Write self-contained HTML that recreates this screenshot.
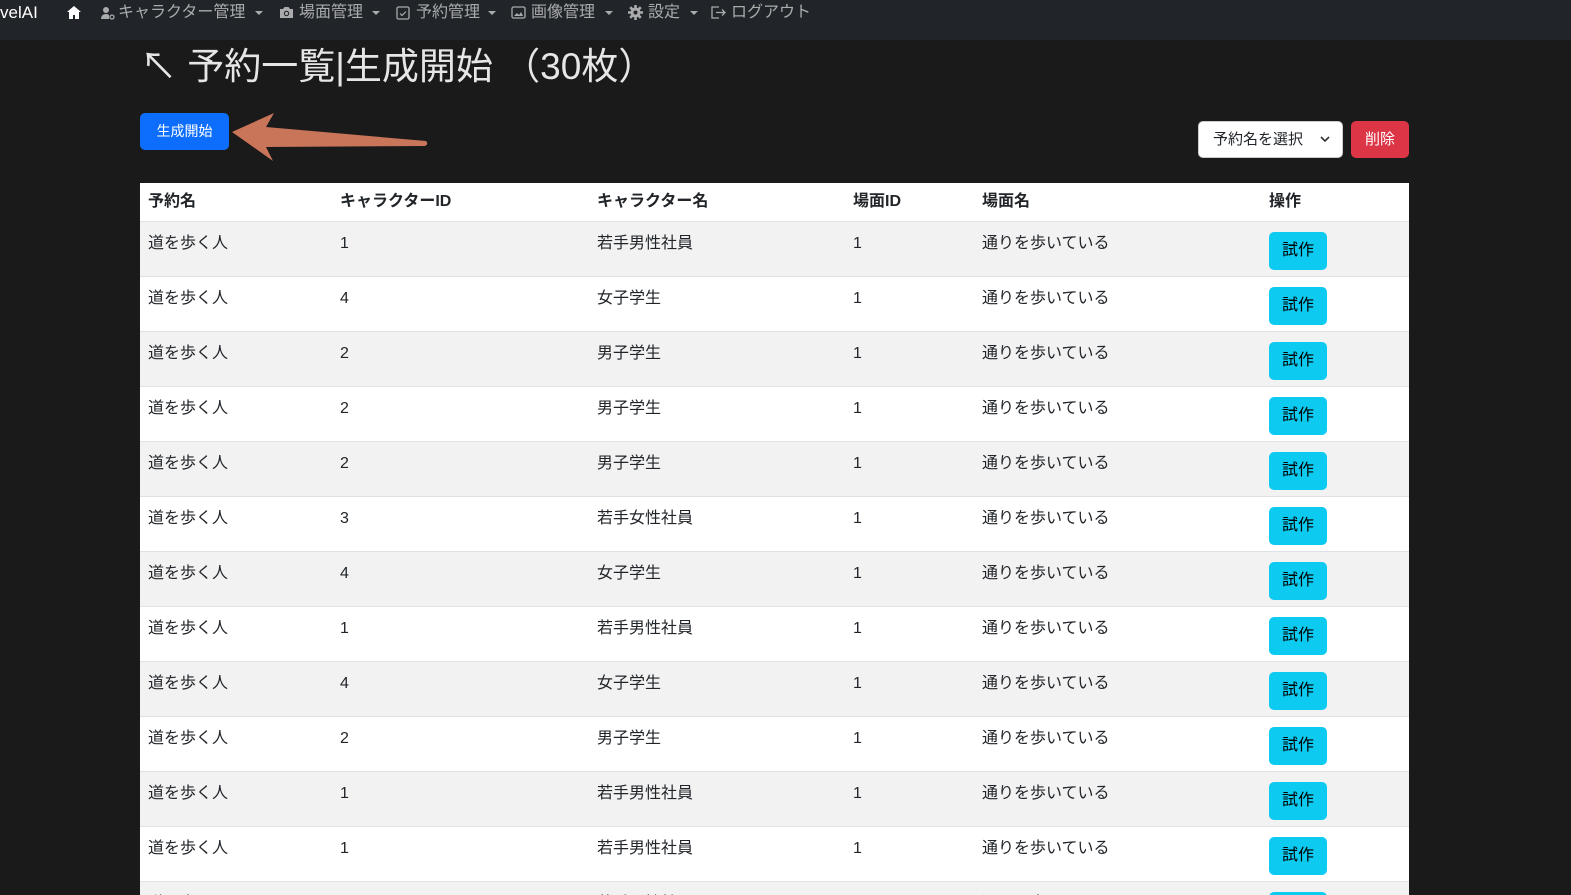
<!DOCTYPE html>
<html><head><meta charset="utf-8">
<style>
*{box-sizing:border-box;margin:0;padding:0}
html,body{width:1571px;height:895px;overflow:hidden}
body{background:#1a1a1a;font-family:"Liberation Sans","Noto Sans CJK JP",sans-serif}
#w{position:relative;width:1571px;height:895px;overflow:hidden}
.nav{position:absolute;left:0;top:0;width:1571px;height:40px;background:#212529}
.nav span{position:absolute;top:3px;font-size:16px;color:#a9abad;white-space:nowrap;line-height:20px}
.nav svg{position:absolute}
.car{position:absolute;top:11px;width:0;height:0;border-left:4px solid transparent;border-right:4px solid transparent;border-top:4px solid #a9abad}
h1{position:absolute;left:140px;top:42px;font-size:37px;font-weight:400;color:#e6e6e6;line-height:50px;white-space:nowrap}
.btn{position:absolute;border-radius:5px;font-size:14px;text-align:center}
table{position:absolute;left:140px;top:183px;width:1269px;border-collapse:collapse;background:#fff;font-size:16px;color:#212529;table-layout:fixed}
td,th{padding:8px;text-align:left;vertical-align:top;border-bottom:1px solid #dee2e6;line-height:22px;overflow:hidden}
th{height:38px;font-weight:700}
td{height:54px;padding-top:11px;padding-bottom:5px}
tr.s td{background:#f2f2f2}
.t{display:inline-block;width:58px;height:38px;background:#0dcaf0;border-radius:5px;text-align:center;line-height:38px;font-size:16px;color:#000;position:relative;top:-1px;vertical-align:top}
</style></head><body><div id="w">
<div class="nav">
<span style="left:0;color:#fff;font-size:17px">velAI</span>
<svg style="left:67px;top:6px" width="14" height="13" viewBox="0 0 14 13"><path d="M7 0L0 6h2v7h4V9h2v4h4V6h2z" fill="#fff"/></svg>
<svg style="left:101px;top:6px" width="14" height="14" viewBox="0 0 14 14"><circle cx="5" cy="4" r="3" fill="#a9abad"/><path d="M0 13c0-4 3-5 5-5s3 1 3 1v4z" fill="#a9abad"/><circle cx="11" cy="11" r="2" fill="none" stroke="#a9abad" stroke-width="1.3"/></svg>
<span style="left:118px">キャラクター管理</span><i class="car" style="left:255px"></i>
<svg style="left:279px;top:6px" width="15" height="13" viewBox="0 0 15 13"><path d="M1 3h3l1.5-2h4L11 3h3v9H1z" fill="#a9abad"/><circle cx="7.5" cy="7.5" r="2.7" fill="#212529"/><circle cx="7.5" cy="7.5" r="1.6" fill="#a9abad"/></svg>
<span style="left:299px">場面管理</span><i class="car" style="left:372px"></i>
<svg style="left:396px;top:5px" width="14" height="15" viewBox="0 0 14 15"><rect x="1" y="2" width="12" height="12" rx="1.5" fill="none" stroke="#a9abad" stroke-width="1.3"/><path d="M4 8.5l2 2 4-4" stroke="#a9abad" fill="none" stroke-width="1.2"/></svg>
<span style="left:416px">予約管理</span><i class="car" style="left:488px"></i>
<svg style="left:511px;top:6px" width="15" height="13" viewBox="0 0 15 13"><rect x="1" y="1" width="13" height="11" rx="1.5" fill="none" stroke="#a9abad" stroke-width="1.3"/><path d="M3 10l3-3 2 2 2-3 2 4z" fill="#a9abad"/></svg>
<span style="left:531px">画像管理</span><i class="car" style="left:605px"></i>
<svg style="left:628px;top:5px" width="15" height="15" viewBox="0 0 15 15"><circle cx="7.5" cy="7.5" r="5" fill="#a9abad"/><path d="M7.5 0v15M0 7.5h15M2.2 2.2l10.6 10.6M12.8 2.2L2.2 12.8" stroke="#a9abad" stroke-width="2.6"/><circle cx="7.5" cy="7.5" r="2" fill="#212529"/></svg>
<span style="left:648px">設定</span><i class="car" style="left:690px"></i>
<svg style="left:711px;top:6px" width="15" height="13" viewBox="0 0 15 13"><path d="M8 1H1v11h7M5 6.5h9M11 3.5l3 3-3 3" fill="none" stroke="#a9abad" stroke-width="1.3"/></svg>
<span style="left:731px">ログアウト</span>
</div>
<h1>↖ 予約一覧|生成開始 （30枚）</h1>
<div class="btn" style="left:140px;top:113px;width:89px;height:37px;background:#0d6efd;color:#fff;line-height:37px">生成開始</div>
<svg style="position:absolute;left:228px;top:110px" width="202" height="52" viewBox="0 0 202 52"><path d="M4 22L46 3 38 17 198 31q3 3-1 5L38 37 45 51z" fill="#c9755a"/></svg>
<div class="btn" style="left:1198px;top:121px;width:145px;height:37px;background:#fff;color:#212529;border:1px solid #ccc;line-height:35px;text-align:left;padding-left:14px;font-size:15px">予約名を選択 <svg style="position:absolute;left:121px;top:14px" width="10" height="7" viewBox="0 0 10 7"><path d="M1 1l4 4 4-4" stroke="#333" fill="none" stroke-width="1.6"/></svg></div>
<div class="btn" style="left:1351px;top:121px;width:58px;height:37px;background:#dc3545;color:#fff;line-height:37px;font-size:15px">削除</div>
<table>
<colgroup><col style="width:192px"><col style="width:257px"><col style="width:256px"><col style="width:129px"><col style="width:287px"><col style="width:148px"></colgroup>
<tr><th>予約名</th><th>キャラクターID</th><th>キャラクター名</th><th>場面ID</th><th>場面名</th><th>操作</th></tr>
<tr class="s"><td>道を歩く人</td><td>1</td><td>若手男性社員</td><td>1</td><td>通りを歩いている</td><td><span class="t">試作</span></td></tr>
<tr><td>道を歩く人</td><td>4</td><td>女子学生</td><td>1</td><td>通りを歩いている</td><td><span class="t">試作</span></td></tr>
<tr class="s"><td>道を歩く人</td><td>2</td><td>男子学生</td><td>1</td><td>通りを歩いている</td><td><span class="t">試作</span></td></tr>
<tr><td>道を歩く人</td><td>2</td><td>男子学生</td><td>1</td><td>通りを歩いている</td><td><span class="t">試作</span></td></tr>
<tr class="s"><td>道を歩く人</td><td>2</td><td>男子学生</td><td>1</td><td>通りを歩いている</td><td><span class="t">試作</span></td></tr>
<tr><td>道を歩く人</td><td>3</td><td>若手女性社員</td><td>1</td><td>通りを歩いている</td><td><span class="t">試作</span></td></tr>
<tr class="s"><td>道を歩く人</td><td>4</td><td>女子学生</td><td>1</td><td>通りを歩いている</td><td><span class="t">試作</span></td></tr>
<tr><td>道を歩く人</td><td>1</td><td>若手男性社員</td><td>1</td><td>通りを歩いている</td><td><span class="t">試作</span></td></tr>
<tr class="s"><td>道を歩く人</td><td>4</td><td>女子学生</td><td>1</td><td>通りを歩いている</td><td><span class="t">試作</span></td></tr>
<tr><td>道を歩く人</td><td>2</td><td>男子学生</td><td>1</td><td>通りを歩いている</td><td><span class="t">試作</span></td></tr>
<tr class="s"><td>道を歩く人</td><td>1</td><td>若手男性社員</td><td>1</td><td>通りを歩いている</td><td><span class="t">試作</span></td></tr>
<tr><td>道を歩く人</td><td>1</td><td>若手男性社員</td><td>1</td><td>通りを歩いている</td><td><span class="t">試作</span></td></tr>
<tr class="s"><td>道を歩く人</td><td>1</td><td>若手男性社員</td><td>1</td><td>通りを歩いている</td><td><span class="t">試作</span></td></tr>
</table>
</div></body></html>
